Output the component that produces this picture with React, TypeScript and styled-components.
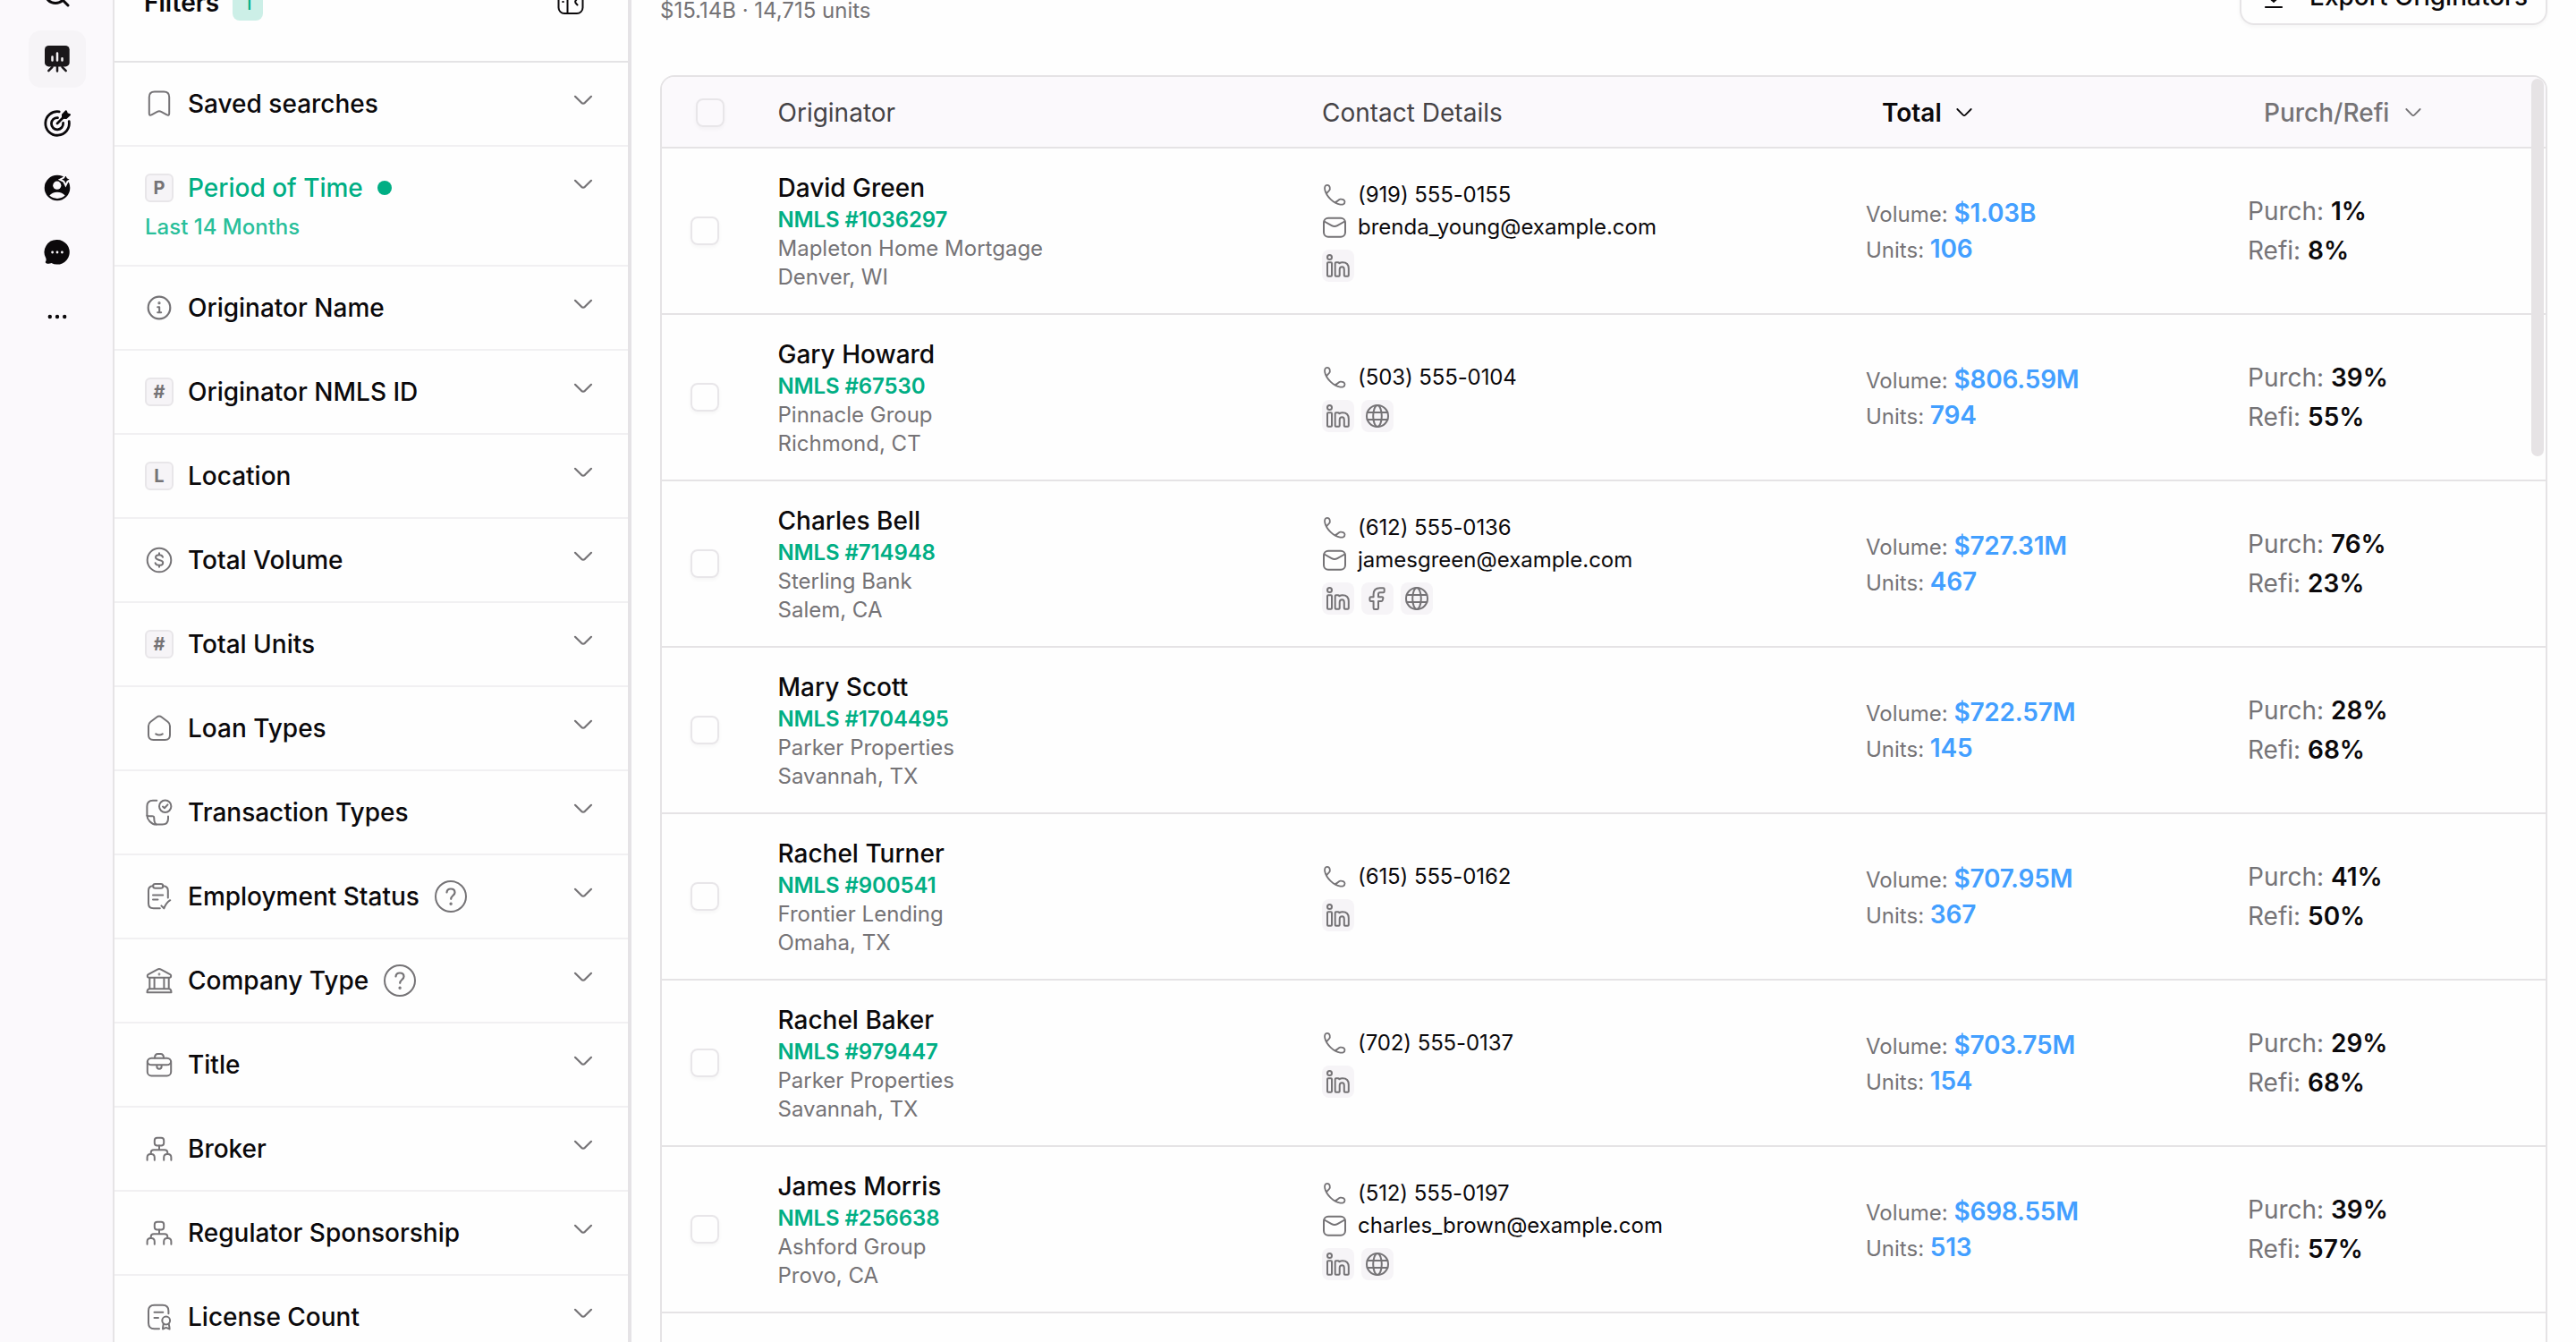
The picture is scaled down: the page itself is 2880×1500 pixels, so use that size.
import React from 'react'
import styled, { createGlobalStyle } from 'styled-components'

const GlobalStyle = createGlobalStyle`
  * {
    box-sizing: border-box;
  }

  body {
    margin: 0;
    background-color: #fefefe;
    color: #0b090b;
    font-family: Inter, sans-serif;
    font-size: 28px;
    line-height: 36px;
    overflow: hidden;
  }
`

// ---------- Icons ----------

type IconName =
  | 'bookmark'
  | 'info'
  | 'dollar'
  | 'home'
  | 'transaction'
  | 'clipboard'
  | 'bank'
  | 'briefcase'
  | 'org'
  | 'license'

const iconShapes: Record<IconName, React.ReactNode> = {
  bookmark: (
    <path d="M4.8 8.5c0-4 2-6 6-6h10.4c4 0 6 2 6 6v18.3c0 1.8-1 2.6-2.6 1.5l-6.4-3.4c-1.6-.8-2.8-.8-4.4 0l-6.4 3.4c-1.6 1.1-2.6.3-2.6-1.5z" />
  ),
  info: (
    <>
      <circle cx="16" cy="16" r="12.3" strokeWidth="2.2" />
      <path d="M14.2 15.2h2v5.9M14.2 21.2h4" />
      <circle cx="16" cy="10.7" r=".6" />
    </>
  ),
  dollar: (
    <>
      <circle cx="16" cy="16" r="13.3" />
      <path d="M20 12.7c-.5-1.6-2-2.4-4-2.4-2.3 0-4 1-4 2.8 0 4 8.2 1.7 8.2 5.8 0 1.8-1.8 2.9-4.2 2.9-2.2 0-3.9-.9-4.4-2.6M16 8.3v2M16 21.8v2" />
    </>
  ),
  home: (
    <>
      <path d="M4 13.5c0-2 .8-3.6 2.4-4.8l6.6-5c1.8-1.4 4.2-1.4 6 0l6.6 5c1.6 1.2 2.4 2.8 2.4 4.8v10c0 3.7-1.8 5.5-5.5 5.5h-13C5.8 29 4 27.2 4 23.5z" />
      <path d="M12.2 22.3c2.5 1.7 5.1 1.7 7.6 0" />
    </>
  ),
  transaction: (
    <>
      <path d="M13.3 2.7H9c-4.3 0-6.6 2.2-6.6 6.5v10.3c0 4.5 5 10 9.8 10h7.3c4.3 0 6.5-2.2 6.5-6.5v-2.5" />
      <path d="M2.4 19.6c1.5.8 3 .8 5 .6 2-.2 2.9.4 2.9 2.3 0 3 .2 5.5 2.4 7" />
      <circle cx="22.7" cy="9.3" r="6.7" />
      <path d="M20 9.6l1.9 1.7 3.6-3.9" />
    </>
  ),
  clipboard: (
    <>
      <path d="M9 4.2C5.6 4.3 4 5.9 4 9.5v14.3c0 3.9 1.7 5.5 5.6 5.5h7.2M20.4 4.2c3.7.1 5.4 1.7 5.4 5.3v8" />
      <rect x="9.2" y="2" width="11" height="4.7" rx="2.3" />
      <path d="M9 14.6h11.2M9 19.6h5.5M18.4 26.4l2.9 3c1.6-4.2 3.6-7 7-9.2" />
    </>
  ),
  bank: (
    <>
      <path d="M2.8 10.8c0-.8.3-1.2 1-1.6L14 3.6c1.4-.8 2.6-.8 4 0l10.2 5.6c.7.4 1 .8 1 1.6 0 1.3-.7 2-2 2H4.8c-1.3 0-2-.7-2-2z" />
      <path d="M5.3 13v12M10.6 13v12M21.4 13v12M26.7 13v12M5.5 25.2h21c1.7 0 3 1.5 3 4h-27c0-2.500 1.300-4 3-4z" />
      <circle cx="16" cy="9" r=".4" />
    </>
  ),
  briefcase: (
    <>
      <rect x="2.8" y="8.7" width="26.4" height="19.7" rx="4.5" />
      <path d="M11 8.5c0-3 1-4.5 3.5-4.500h3c2.500 0 3.500 1.500 3.500 4.500M2.800 12.500c.3 2.700 2 3.800 5 3.800h16.400c3 0 4.700-1.100 5-3.800M13.400 16.500v1.800c0 3.300 5.200 3.300 5.200 0v-1.800" />
    </>
  ),
  org: (
    <>
      <rect x="10.8" y="3.8" width="10.4" height="8.7" rx="3" />
      <path d="M16 12.500v4.700M6.700 21.500v-1c0-2.200 1.100-3.300 3.300-3.300h12c2.200 0 3.300 1.100 3.300 3.300v1" />
      <path d="M2.600 28.700v-3c0-2.600 1-3.700 3.600-3.700h1c2.600 0 3.600 1.100 3.600 3.700v3M21.200 28.700v-3c0-2.600 1-3.700 3.600-3.700h1c2.600 0 3.600 1.100 3.600 3.700v3" />
    </>
  ),
  license: (
    <>
      <path d="M16 29.300h-5.500C6 29.300 4 27.300 4 22.800V9.200c0-4.500 2-6.500 6.500-6.500h9.400c4.500 0 6.500 2 6.500 6.500v3" />
      <path d="M10.500 10.700h9.800M10.500 17h4.500" />
      <circle cx="23.7" cy="20" r="4.4" />
      <path d="M20.800 23.500c-.4 2-.8 4-.8 6l3.700-1.600 3.900 1.600c0-2-.5-4-1-6" />
    </>
  ),
}

const LineIcon: React.FC<{ name: IconName }> = ({ name }) => (
  <LineSvg width="32" height="32" viewBox="0 0 32 32">
    {iconShapes[name]}
  </LineSvg>
)

const ChevronDown: React.FC = () => (
  <ItemChevron width="32" height="32" viewBox="0 0 32 32">
    <path d="M7 11.8l7.100 7c1.300 1.100 2.500 1.100 3.800 0l7.100-7" />
  </ItemChevron>
)

const SortChevron: React.FC = () => (
  <SortSvg width="18" height="12" viewBox="0 0 18 12">
    <path d="M1.300 2l6.300 6.400c1 .9 1.800.9 2.800 0L16.700 2" />
  </SortSvg>
)

const HelpIcon: React.FC = () => (
  <HelpSvg width="36" height="36" viewBox="0 0 36 36">
    <circle cx="18" cy="18" r="17" />
    <path d="M13.500 13.500c.2-2.600 2-4 4.500-4 2.600 0 4.500 1.600 4.500 4 0 3.300-4.300 3.700-4.300 7.300" strokeWidth="2.2" />
    <circle cx="18.1" cy="26.2" r=".7" />
  </HelpSvg>
)

const PhoneIcon: React.FC = () => (
  <PhoneSvg width="28" height="28" viewBox="0 0 28 28">
    <path d="M5.200 12.700c.2-1.900 1.500-2.200 2.700-3.500 1.900-2.200.9-6.400-2-6.400C3.400 2.800 2.700 5.500 3.200 8c1.500 7.300 9.600 15.400 17.300 16.600 2.600.4 5-.4 5-3 0-2.400-2.900-3.300-5-3-2.300.3-3.200 3.100-5.700 3.400" />
  </PhoneSvg>
)

const MailIcon: React.FC = () => (
  <LineSvg width="28" height="28" viewBox="0 0 28 28">
    <rect x="2" y="3.8" width="24" height="21" rx="5" />
    <path d="M2.600 7.500l8.200 4.700c2.300 1.300 4.100 1.300 6.400 0l8.200-4.700" />
  </LineSvg>
)

type Social = 'linkedin' | 'facebook' | 'web'

const SocialIcon: React.FC<{ kind: Social }> = ({ kind }) => (
  <SocialBox>
    <LineSvg width="28" height="28" viewBox="0 0 28 28">
      {kind === 'linkedin' && (
        <>
          <circle cx="4.5" cy="4.6" r="2.5" />
          <rect x="2" y="10.3" width="5" height="15.5" rx="1" />
          <path d="M11.700 10.300h2.500c.6 0 1 .3 1 1 1.200-.8 2.300-1.100 3.800-1.100 4.400 0 6.800 2.500 6.800 6.900v7.700c0 .6-.4 1-1 1h-3c-.6 0-1-.4-1-1v-6.600c0-1.900-.7-3-2.400-3-1.800 0-2.700 1.100-2.700 3v6.600c0 .6-.4 1-1 1h-3c-.6 0-1-.4-1-1V11.300c0-.6.4-1 1-1z" />
        </>
      )}
      {kind === 'facebook' && (
        <path d="M6.800 12.300c-1 0-1.400.4-1.400 1.300v2.200c0 .9.4 1.300 1.400 1.300h2.800v7.600c0 .9.4 1.300 1.300 1.300h2.800c.9 0 1.300-.4 1.300-1.300v-7.600h3.300c.8 0 1.200-.3 1.400-1l.6-2.200c.3-1-.1-1.600-1.100-1.600H15V9.200c0-1.300.6-1.900 1.900-1.900h3.500c.9 0 1.300-.4 1.300-1.300V3.500c0-.9-.4-1.300-1.300-1.300h-3.600c-4.600 0-7.200 2.500-7.200 7v3.100z" />
      )}
      {kind === 'web' && (
        <>
          <circle cx="14" cy="14" r="12" />
          <ellipse cx="14" cy="14" rx="4.8" ry="12" />
          <path d="M2.700 10h22.600M2.700 18h22.600" />
        </>
      )}
    </LineSvg>
  </SocialBox>
)

// ---------- Data ----------

type Filter = {
  label: string
  icon?: IconName
  letter?: string
  value?: string
  help?: boolean
}

const filters: Filter[] = [
  { label: 'Saved searches', icon: 'bookmark' },
  { label: 'Period of Time', letter: 'P', value: 'Last 14 Months' },
  { label: 'Originator Name', icon: 'info' },
  { label: 'Originator NMLS ID', letter: '#' },
  { label: 'Location', letter: 'L' },
  { label: 'Total Volume', icon: 'dollar' },
  { label: 'Total Units', letter: '#' },
  { label: 'Loan Types', icon: 'home' },
  { label: 'Transaction Types', icon: 'transaction' },
  { label: 'Employment Status', icon: 'clipboard', help: true },
  { label: 'Company Type', icon: 'bank', help: true },
  { label: 'Title', icon: 'briefcase' },
  { label: 'Broker', icon: 'org' },
  { label: 'Regulator Sponsorship', icon: 'org' },
  { label: 'License Count', icon: 'license' },
]

type Originator = {
  name: string
  nmls: string
  company: string
  city: string
  phone?: string
  email?: string
  socials: Social[]
  volume: string
  units: string
  purch: string
  refi: string
}

const originators: Originator[] = [
  { name: 'David Green', nmls: '1036297', company: 'Mapleton Home Mortgage', city: 'Denver, WI', phone: '(919) 555-0155', email: 'brenda_young@example.com', socials: ['linkedin'], volume: '$1.03B', units: '106', purch: '1%', refi: '8%' },
  { name: 'Gary Howard', nmls: '67530', company: 'Pinnacle Group', city: 'Richmond, CT', phone: '(503) 555-0104', socials: ['linkedin', 'web'], volume: '$806.59M', units: '794', purch: '39%', refi: '55%' },
  { name: 'Charles Bell', nmls: '714948', company: 'Sterling Bank', city: 'Salem, CA', phone: '(612) 555-0136', email: 'jamesgreen@example.com', socials: ['linkedin', 'facebook', 'web'], volume: '$727.31M', units: '467', purch: '76%', refi: '23%' },
  { name: 'Mary Scott', nmls: '1704495', company: 'Parker Properties', city: 'Savannah, TX', socials: [], volume: '$722.57M', units: '145', purch: '28%', refi: '68%' },
  { name: 'Rachel Turner', nmls: '900541', company: 'Frontier Lending', city: 'Omaha, TX', phone: '(615) 555-0162', socials: ['linkedin'], volume: '$707.95M', units: '367', purch: '41%', refi: '50%' },
  { name: 'Rachel Baker', nmls: '979447', company: 'Parker Properties', city: 'Savannah, TX', phone: '(702) 555-0137', socials: ['linkedin'], volume: '$703.75M', units: '154', purch: '29%', refi: '68%' },
  { name: 'James Morris', nmls: '256638', company: 'Ashford Group', city: 'Provo, CA', phone: '(512) 555-0197', email: 'charles_brown@example.com', socials: ['linkedin', 'web'], volume: '$698.55M', units: '513', purch: '39%', refi: '57%' },
]

// ---------- Sections ----------

const NavRail: React.FC = () => (
  <Rail>
    <RailButton>
      <svg width="32" height="32" viewBox="0 0 32 32" fill="none" stroke="#0b090b" strokeWidth="3" strokeLinecap="round">
        <circle cx="14" cy="14" r="11.5" />
        <path d="M22.500 22.500l5.500 5.500" />
      </svg>
    </RailButton>
    <RailButton $active>
      <svg width="32" height="32" viewBox="0 0 32 32" fill="none" strokeWidth="2.5" strokeLinecap="round">
        <rect x="2" y="1" width="27.7" height="23.4" rx="4.5" fill="#1a171a" />
        <path d="M16 24v5.500M10.500 24.800l-4.200 4.400M21.500 24.800l4.200 4.400" stroke="#1a171a" />
        <path d="M10.500 13.500v4M16 9.500v8M21.500 15.300v2.200" stroke="#f5f3f5" />
      </svg>
    </RailButton>
    <RailButton>
      <svg width="32" height="32" viewBox="0 0 32 32" fill="none" stroke="#0b090b" strokeWidth="2.8" strokeLinecap="round">
        <path d="M18.200 2.800A13.300 13.300 0 1 0 29.200 13.600" />
        <path d="M16.500 9.600A6.600 6.600 0 1 0 22.600 15.500" />
        <path d="M16 16l8-8" />
        <path d="M22 9.700V6.200l3.800-4 1.200 2.900 3 1.200-4 3.700z" fill="#0b090b" strokeWidth="2" strokeLinejoin="round" />
      </svg>
    </RailButton>
    <RailButton>
      <svg width="32" height="32" viewBox="0 0 32 32">
        <circle cx="16" cy="16" r="14.3" fill="#0b090b" />
        <circle cx="15.8" cy="13.2" r="4.6" fill="#fbf9fc" />
        <path d="M7.300 24.600c2-2.500 5-3.800 8.700-3.800s6.700 1.300 8.700 3.800c-2.500 2.200-5.300 3.300-8.700 3.300s-6.200-1.100-8.700-3.300z" fill="#fbf9fc" />
        <path d="M25.400.2l2.200 4.400 4.200 2.100-4.200 2.100-2.200 4.400-2.200-4.400-4.200-2.100 4.200-2.100z" fill="#0b090b" stroke="#fbf9fc" strokeWidth="2" />
      </svg>
    </RailButton>
    <RailButton>
      <svg width="32" height="32" viewBox="0 0 32 32">
        <path d="M16 2a13.800 13.800 0 1 1-6.500 26c-1.600.8-3.700.8-5.500.4-1.300-.3-1.500-1.400-.8-2.400.6-1 .5-2.200 0-3.700A13.800 13.800 0 0 1 16 2z" fill="#0b090b" />
        <g fill="#fbf9fc">
          <circle cx="10.6" cy="16" r="1.4" />
          <circle cx="16" cy="16" r="1.4" />
          <circle cx="21.4" cy="16" r="1.4" />
        </g>
      </svg>
    </RailButton>
    <RailButton>
      <svg width="32" height="32" viewBox="0 0 32 32" fill="#0b090b">
        <circle cx="7.8" cy="16" r="2.2" />
        <circle cx="16" cy="16" r="2.2" />
        <circle cx="24.2" cy="16" r="2.2" />
      </svg>
    </RailButton>
  </Rail>
)

const FilterPanel: React.FC = () => (
  <Panel>
    <PanelHeader>
      <PanelTitle>Filters</PanelTitle>
      <CountBadge>1</CountBadge>
      <CollapseSvg width="32" height="32" viewBox="0 0 32 32">
        <rect x="2.5" y="2" width="27" height="26" rx="6.5" />
        <path d="M12.500 2v26M7.200 9h.6M7.200 15h.6M23.500 11.500c-3.200 3-3.200 4 0 7" />
      </CollapseSvg>
    </PanelHeader>
    {filters.map((filter) => (
      <FilterItem key={filter.label}>
        <FilterBody>
          <FilterLine $active={!!filter.value}>
            {filter.icon && <LineIcon name={filter.icon} />}
            {filter.letter && <LetterKey>{filter.letter}</LetterKey>}
            <span>{filter.label}</span>
            {filter.value && <ActiveDot />}
            {filter.help && <HelpIcon />}
          </FilterLine>
          {filter.value && <FilterValue>{filter.value}</FilterValue>}
        </FilterBody>
        <ChevronDown />
      </FilterItem>
    ))}
  </Panel>
)

const OriginatorRow: React.FC<{ row: Originator }> = ({ row }) => (
  <TableRow>
    <CheckCell>
      <Checkbox />
    </CheckCell>
    <OriginatorCell>
      <Name>{row.name}</Name>
      <Nmls>NMLS #{row.nmls}</Nmls>
      <Detail>{row.company}</Detail>
      <Detail>{row.city}</Detail>
    </OriginatorCell>
    <ContactCell>
      {row.phone && (
        <ContactLine $phone>
          <PhoneIcon />
          {row.phone}
        </ContactLine>
      )}
      {row.email && (
        <ContactLine>
          <MailIcon />
          {row.email}
        </ContactLine>
      )}
      {row.socials.length > 0 && (
        <SocialLine>
          {row.socials.map((kind) => (
            <SocialIcon key={kind} kind={kind} />
          ))}
        </SocialLine>
      )}
    </ContactCell>
    <div>
      <TotalLine>
        Volume: <TotalValue>{row.volume}</TotalValue>
      </TotalLine>
      <TotalLine>
        Units: <TotalValue>{row.units}</TotalValue>
      </TotalLine>
    </div>
    <div>
      <ShareLine>
        Purch: <ShareValue>{row.purch}</ShareValue>
      </ShareLine>
      <ShareLine>
        Refi: <ShareValue>{row.refi}</ShareValue>
      </ShareLine>
    </div>
  </TableRow>
)

const App: React.FC = () => {
  return (
    <Page>
      <GlobalStyle />
      <NavRail />
      <FilterPanel />
      <Main>
        <TopBar>
          <Summary>$15.14B · 14,715 units</Summary>
          <ExportButton>
            <DownloadSvg width="32" height="32" viewBox="0 0 32 32">
              <path d="M16 4v18M9.500 15.500l5 5c1 1 2 1 3 0l5-5M7 28h18" />
            </DownloadSvg>
            Export Originators
          </ExportButton>
        </TopBar>
        <Table>
          <TableHead>
            <CheckCell $head>
              <Checkbox />
            </CheckCell>
            <HeadCell>Originator</HeadCell>
            <HeadCell>Contact Details</HeadCell>
            <SortCell $active>
              Total
              <SortChevron />
            </SortCell>
            <SortCell>
              Purch/Refi
              <SortChevron />
            </SortCell>
          </TableHead>
          {originators.map((row) => (
            <OriginatorRow key={row.nmls} row={row} />
          ))}
          <ScrollThumb />
        </Table>
      </Main>
    </Page>
  )
}

// ---------- Styles ----------

const Page = styled.div`
  display: flex;
  width: 2880px;
  height: 1500px;
  overflow: hidden;
`

const LineSvg = styled.svg`
  flex: none;
  display: block;
  fill: none;
  stroke: #757376;
  stroke-width: 2;
  stroke-linecap: round;
  stroke-linejoin: round;
`

const ItemChevron = styled(LineSvg)`
  margin-top: -2px;
  stroke-width: 2.2;
`

const SortSvg = styled(LineSvg)`
  stroke: currentColor;
  stroke-width: 1.8;
`

const HelpSvg = styled(LineSvg)`
  margin-left: 1px;
`

const PhoneSvg = styled(LineSvg)`
  stroke-width: 1.8;
`

const CollapseSvg = styled(LineSvg)`
  margin-left: auto;
  stroke: #0b090b;
`

const DownloadSvg = styled(LineSvg)`
  stroke: #0b090b;
  stroke-width: 2.2;
`

const Rail = styled.nav`
  display: flex;
  flex-direction: column;
  align-items: center;
  flex: none;
  gap: 8px;
  width: 126px;
  margin-top: -38px;
  background-color: #fbf9fc;
`

const RailButton = styled.div<{ $active?: boolean }>`
  display: flex;
  align-items: center;
  justify-content: center;
  flex: none;
  width: 64px;
  height: 64px;
  margin-left: 2px;
  border-radius: 14px;
  background-color: ${(props) => (props.$active ? '#f6f4f7' : 'transparent')};
`

const Panel = styled.aside`
  flex: none;
  width: 580px;
  border-left: 2px solid #e6e4e6;
  border-right: 4px solid #e5e3e6;
`

const PanelHeader = styled.div`
  display: flex;
  align-items: center;
  height: 134px;
  margin-top: -64px;
  padding: 2px 48px 0 33px;
  border-bottom: 2px solid #e4e3e5;
`

const PanelTitle = styled.div`
  font-weight: 600;
`

const CountBadge = styled.div`
  display: flex;
  align-items: center;
  justify-content: center;
  width: 34px;
  height: 40px;
  margin-left: 15px;
  border-radius: 8px;
  background-color: #ccefe7;
  color: #00ae84;
  font-size: 24px;
`

const FilterItem = styled.div`
  display: flex;
  align-items: flex-start;
  justify-content: space-between;
  padding: 28px 34px;
  border-bottom: 2px solid #f1f0f2;
`

const FilterBody = styled.div`
  display: flex;
  flex-direction: column;
  gap: 10px;
`

const FilterLine = styled.div<{ $active?: boolean }>`
  display: flex;
  align-items: center;
  gap: 16px;
  height: 36px;
  font-weight: 500;
  color: ${(props) => (props.$active ? '#00ae84' : '#0b090b')};
`

const LetterKey = styled.div`
  display: flex;
  align-items: center;
  justify-content: center;
  width: 32px;
  height: 32px;
  border: 2px solid #e8e6e9;
  border-radius: 6px;
  background-color: #f6f4f7;
  color: #757376;
  font-size: 20px;
  font-weight: 700;
`

const ActiveDot = styled.span`
  width: 16px;
  height: 16px;
  border-radius: 50%;
  background-color: #00ae84;
`

const FilterValue = styled.div`
  height: 30px;
  color: #29bf9a;
  font-size: 24px;
  font-weight: 500;
  line-height: 32px;
`

const Main = styled.main`
  flex: 1;
  padding: 0 32px;
`

const TopBar = styled.header`
  display: flex;
  align-items: flex-start;
  justify-content: space-between;
  height: 120px;
  margin-top: -36px;
`

const Summary = styled.div`
  padding-top: 32px;
  color: #757376;
  font-size: 24px;
  line-height: 32px;
`

const ExportButton = styled.div`
  display: flex;
  align-items: center;
  gap: 24px;
  height: 64px;
  padding: 0 20px;
  border: 2px solid #e6e4e6;
  border-radius: 16px;
  box-shadow: 0 2px 4px rgba(20, 10, 20, 0.04);
  font-weight: 500;
`

const Table = styled.section`
  position: relative;
  height: 1500px;
  border: 2px solid #e5e3e5;
  border-radius: 16px;
  overflow: hidden;
`

const TableRow = styled.div`
  display: grid;
  grid-template-columns: 129.5px 608.5px 608px 427px 1fr;
  align-items: center;
  height: 186px;
  border-bottom: 2px solid #e5e3e5;
`

const TableHead = styled(TableRow)`
  height: 80px;
  padding-top: 2px;
  background-color: #fbf9fc;
`

const CheckCell = styled.div<{ $head?: boolean }>`
  padding-left: ${(props) => (props.$head ? 38 : 32)}px;
`

const Checkbox = styled.div`
  width: 32px;
  height: 32px;
  border: 2px solid #e8e6e9;
  border-radius: 8px;
  box-shadow: 0 2px 4px rgba(20, 10, 20, 0.04);
`

const HeadCell = styled.div`
  color: #454346;
`

const SortCell = styled.div<{ $active?: boolean }>`
  display: flex;
  align-items: center;
  gap: ${(props) => (props.$active ? 16 : 18)}px;
  padding-left: 18px;
  font-weight: ${(props) => (props.$active ? 600 : 500)};
  color: ${(props) => (props.$active ? '#0b090b' : '#757376')};
`

const OriginatorCell = styled.div`
  padding-top: 2px;
`

const Name = styled.div`
  margin-bottom: 2px;
  font-weight: 500;
`

const Nmls = styled.div`
  color: #00ae84;
  font-size: 24px;
  font-weight: 600;
  letter-spacing: -0.12px;
  line-height: 32px;
`

const Detail = styled.div`
  color: #757376;
  font-size: 24px;
  line-height: 32px;
`

const ContactCell = styled.div`
  display: flex;
  flex-direction: column;
  gap: 4px;
`

const ContactLine = styled.div<{ $phone?: boolean }>`
  display: flex;
  align-items: center;
  gap: 12px;
  font-size: 24px;
  letter-spacing: ${(props) => (props.$phone ? '-0.1px' : 'normal')};
  line-height: 32px;
`

const SocialLine = styled.div`
  display: flex;
  gap: 8px;
  margin-top: 5px;
`

const SocialBox = styled.div`
  display: flex;
  align-items: center;
  justify-content: center;
  width: 36px;
  height: 36px;
  border-radius: 8px;
  background-color: #f6f4f7;
`

const TotalLine = styled.div`
  height: 40px;
  color: #757376;
  font-size: 24px;
  line-height: 40px;
`

const TotalValue = styled.span`
  color: #439fff;
  font-size: 28px;
  font-weight: 600;
  letter-spacing: -0.2px;
`

const ShareLine = styled.div`
  color: #757376;
  line-height: 44px;
`

const ShareValue = styled.span`
  color: #0b090b;
  font-weight: 600;
`

const ScrollThumb = styled.div`
  position: absolute;
  top: 2px;
  right: 2px;
  width: 14px;
  height: 422px;
  border-radius: 7px;
  background-color: #e6e3e5;
`

export default App
